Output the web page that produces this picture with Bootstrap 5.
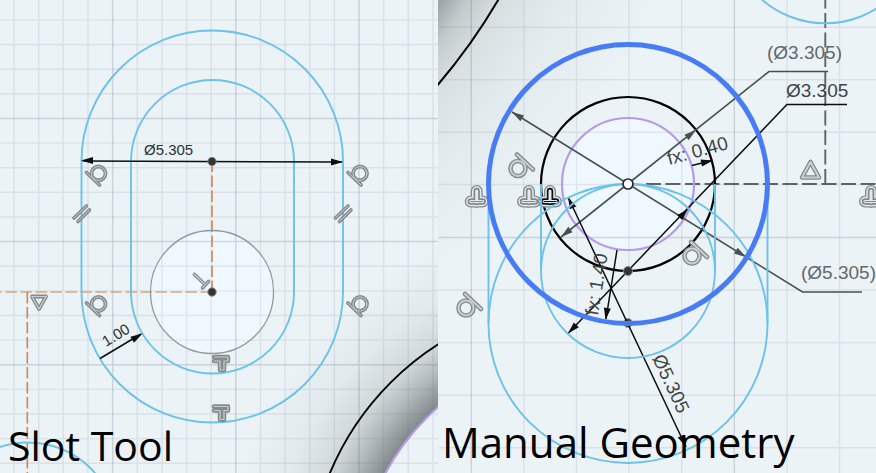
<!DOCTYPE html>
<html lang="en">
<head>
<meta charset="utf-8">
<meta name="viewport" content="width=device-width, initial-scale=1">
<title>Slot Tool and Manual Geometry</title>
<link rel="stylesheet" href="https://cdn.jsdelivr.net/npm/bootstrap@5.3.0/dist/css/bootstrap.min.css">
<style>
  body { background: #ebf3f7; font-family: "Liberation Sans", Arial, sans-serif; }
  .sketch { background: #ebf3f7; }
  .sketch svg { font-family: "Liberation Sans", Arial, sans-serif; }
  .sketch-title { color: #000; font-family: "Open Sans", "Noto Sans", sans-serif; font-weight: 500; font-size: 41px; line-height: 56px; padding-left: 8px; }
  .sketch-title.wide { font-size: 42px; padding: 0 0 3px 4px; }
  .minor { stroke: #5a6e78; stroke-opacity: .13; stroke-width: 1.4; }
  .major { stroke: #5a6e78; stroke-opacity: .23; stroke-width: 1.5; }
  .cyan { stroke: #6cc2e9; stroke-width: 1.9; }
  .ink { stroke: #0b0f10; stroke-width: 1.5; }
  .slate { stroke: #465052; stroke-width: 1.6; }
  .violet { stroke: #b69aea; stroke-width: 2.2; }
  .orange { stroke: #d28b55; stroke-width: 1.7; stroke-dasharray: 11.5 3.5; }
  .axis { stroke: #5d6466; stroke-width: 1.9; stroke-dasharray: 15 4.5; }
  .dim-sm { font-size: 15px; fill: #2b3133; }
  .dim { font-size: 19px; fill: #3f4547; }
  .dim-ref { font-size: 19px; fill: #63696b; }
  .glyph-edge { stroke: #85898b; }
  .glyph-core { stroke: #c9d0d3; }
</style>
</head>
<body>
<svg width="0" height="0" class="position-absolute" aria-hidden="true">
  <defs>
    <g id="tangent" fill="none" stroke-linecap="round">
      <g class="glyph-edge" stroke-width="3.800"><circle cx="2.500" cy="-1.500" r="7"/><path d="M-9.500-2.500L3.500 10"/></g>
      <g class="glyph-core" stroke-width="1"><circle cx="2.500" cy="-1.500" r="7"/><path d="M-9.500-2.500L3.500 10"/></g>
    </g>
    <g id="tangent-up" fill="none" stroke-linecap="round">
      <g class="glyph-edge" stroke-width="4.600"><circle r="7.500"/><path d="M-1-14L15 1"/></g>
      <g class="glyph-core" stroke-width="2"><circle r="7.500"/><path d="M-1-14L15 1"/></g>
    </g>
    <g id="parallel" fill="none" stroke-linecap="round">
      <path class="glyph-edge" d="M-7.500 5L5-7M-3.500 8.500L8-3" stroke-width="3.600"/>
      <path class="glyph-core" d="M-7.500 5L5-7M-3.500 8.500L8-3" stroke-width="1"/>
    </g>
    <g id="fixed" fill="none" stroke-linejoin="round" stroke-linecap="round">
      <path class="glyph-edge" d="M-7-6H7M-7-2H-1V7H3V-2H7V-6" stroke-width="4.500"/>
      <path class="glyph-core" d="M-7-6H7V-2H3V7H-1V-2H-7" stroke-width="1.200"/>
    </g>
    <g id="stamp" fill="none" stroke-linecap="round">
      <path d="M0-7V4M-6 3.500H6" stroke="#85898b" stroke-width="12"/>
      <path d="M0-7V4M-6 3.500H6" stroke="#e3eaed" stroke-width="9.400"/>
      <path d="M0-7V4M-6 3.500H6" stroke="currentColor" stroke-width="6.400"/>
      <path d="M0-7V4M-6 3.500H6" stroke="#e3eaed" stroke-width="3"/>
      <path d="M-6 3.500H6" stroke="currentColor" stroke-width="1"/>
    </g>
    <path id="arrow" d="M0 0L-12-3.500V3.500Z"/>
  </defs>
</svg>
<main class="container-fluid p-0">
  <div class="row g-0">
    <div class="col-6">
      <figure class="sketch position-relative overflow-hidden m-0">
        <svg class="d-block w-100 h-auto" viewBox="0 0 438 473" fill="none" role="img" aria-label="Slot drawn with the slot tool">
          <defs>
            <radialGradient id="shadeL" gradientUnits="userSpaceOnUse" cx="590" cy="582" r="370">
              <stop offset=".627" stop-color="#838a8c"/><stop offset=".7" stop-color="#b3babd"/><stop offset=".76" stop-color="#d0d8da"/><stop offset=".86" stop-color="#e1e9ec"/><stop offset="1" stop-color="#ebf3f7"/>
            </radialGradient>
          </defs>
          <circle cx="590" cy="582" r="370" fill="url(#shadeL)"/>
          <circle cx="590" cy="582" r="231.700" fill="#ebf3f7"/>
          <circle cx="212" cy="292" r="61.500" fill="#f0f8ff"/>
          <path class="minor" d="M14 0V473M38.700 0V473M63.300 0V473M88 0V473M137.300 0V473M162 0V473M186.600 0V473M211.200 0V473M260.500 0V473M285.100 0V473M309.700 0V473M334.400 0V473M383.600 0V473M408.300 0V473M433 0V473M0 19.900H438M0 44.500H438M0 69.200H438M0 93.800H438M0 143.100H438M0 167.700H438M0 192.300H438M0 217H438M0 266.200H438M0 290.900H438M0 315.500H438M0 340.100H438M0 389.400H438M0 414H438M0 438.600H438M0 463.300H438"/>
          <path class="major" d="M112.700 0V473M235.800 0V473M359 0V473M0 118.500H438M0 241.600H438M0 364.800H438"/>
          <circle cx="590" cy="582" r="282" stroke="#000" stroke-width="1.900"/>
          <circle cx="590" cy="582" r="231.700" class="violet"/>
          <path class="orange" d="M27.300 292V473M212 292V161"/>
          <path class="orange" stroke-opacity=".75" d="M212 292H0"/>
          <circle cx="28" cy="531.300" r="88.800" class="cyan"/>
          <rect x="81.500" y="30.500" width="261.500" height="392" rx="130.700" class="cyan"/>
          <rect x="131" y="80" width="163" height="293.500" rx="81.500" class="cyan"/>
          <circle cx="212" cy="292" r="61.500" stroke="#929a9e" stroke-width="1.300"/>
          <path class="ink" d="M83 161L342 162M100 358.500L141 334"/>
          <g fill="#0b0f10"><use href="#arrow" transform="translate(81 160.500) rotate(180)"/><use href="#arrow" transform="translate(343 162)"/><use href="#arrow" transform="translate(142.500 333.500) rotate(-31)"/></g>
          <g fill="#333" stroke="#8c8c8c" stroke-width="1"><circle cx="212" cy="161.500" r="4.200"/><circle cx="212" cy="292" r="4.200"/></g>
          <use href="#tangent" x="96" y="175"/><use href="#tangent" x="357.500" y="175"/><use href="#tangent" x="96" y="305.500"/><use href="#tangent" x="357.500" y="305.500"/>
          <use href="#parallel" x="81.500" y="213"/><use href="#parallel" x="343" y="213"/>
          <use href="#fixed" x="221" y="363"/><use href="#fixed" x="221" y="412.500"/>
          <path class="glyph-edge" d="M194.500 274.500L204.500 284M202.500 288L208.500 281.500" stroke-width="3.600" stroke-linecap="round"/>
          <path class="glyph-core" d="M194.500 274.500L204.500 284M202.500 288L208.500 281.500" stroke-width="1.100" stroke-linecap="round"/>
          <path class="glyph-edge" d="M32 296.500H46L39 309Z" stroke-width="3.800" stroke-linejoin="round"/><path class="glyph-core" d="M32 296.500H46L39 309Z" stroke-width="1.200"/>
          <text x="144" y="155" class="dim-sm">Ø5.305</text>
          <text class="dim-sm" transform="translate(106 347) rotate(-31)">1.00</text>
        </svg>
        <figcaption class="sketch-title position-absolute start-0 bottom-0">Slot Tool</figcaption>
      </figure>
    </div>
    <div class="col-6">
      <figure class="sketch position-relative overflow-hidden m-0">
        <svg class="d-block w-100 h-auto" viewBox="0 0 438 473" fill="none" role="img" aria-label="Slot drawn with manual geometry">
          <defs>
            <radialGradient id="shadeR" gradientUnits="userSpaceOnUse" cx="-459" cy="-305" r="750">
              <stop offset=".735" stop-color="#9aa1a4"/><stop offset=".77" stop-color="#c3cbcd"/><stop offset=".81" stop-color="#d8e0e2"/><stop offset=".88" stop-color="#e3ebee"/><stop offset="1" stop-color="#ebf3f7"/>
            </radialGradient>
          </defs>
          <circle cx="-459" cy="-305" r="750" fill="url(#shadeR)"/>
          <circle cx="190" cy="184" r="66" fill="#f0f8ff"/>
          <path class="minor" d="M85.900 0V473M138.500 0V473M191 0V473M243.700 0V473M348.900 0V473M401.500 0V473M0 27.300H438M0 79.800H438M0 132.300H438M0 184.500H438M0 290H438M0 342.600H438M0 395.200H438M0 447.700H438"/>
          <path class="major" d="M33.300 0V473M296.300 0V473M0 237.500H438"/>
          <circle cx="-459" cy="-305" r="602" stroke="#000" stroke-width="2"/>
          <circle cx="-459" cy="-305" r="551" class="violet"/>
          <path class="axis" d="M387.300 184V0M208 184H438"/>
          <circle cx="190" cy="184" r="87" stroke="#000" stroke-width="2.200"/>
          <circle cx="190" cy="184" r="66" class="violet"/>
          <path class="slate" d="M390 71.500H331L123 237M424 292H364.500L74 112"/>
          <g fill="#465052"><use href="#arrow" transform="translate(258 130) rotate(-38)"/><use href="#arrow" transform="translate(123 237) rotate(142)"/><use href="#arrow" transform="translate(74 112) rotate(212)"/><use href="#arrow" transform="translate(308 257) rotate(32)"/></g>
          <circle cx="190" cy="323" r="4.500" fill="#444" stroke="#999"/>
          <g color="#85898b"><use href="#stamp" x="38.700" y="198"/><use href="#stamp" x="91" y="198"/><use href="#stamp" x="433" y="198"/></g>
          <g color="#111"><use href="#stamp" x="112" y="198"/></g>
          <path class="ink" d="M409 104.500H349L130 333.500M130 197L248 447M254 165.500L274 160.500M179 250L168 319"/>
          <g fill="#0b0f10"><use href="#arrow" transform="translate(250 209) rotate(-46)"/><use href="#arrow" transform="translate(130 333.500) rotate(134)"/><use href="#arrow" transform="translate(130 197) rotate(245)"/><use href="#arrow" transform="translate(248 447) rotate(65)"/><use href="#arrow" transform="translate(275 160.500) rotate(-12)"/><use href="#arrow" transform="translate(167.500 320) rotate(99)"/></g>
          <g class="cyan"><circle cx="387.300" cy="-73.500" r="96.800"/><circle cx="190" cy="271" r="87"/><circle cx="190" cy="323.500" r="139.500"/><path d="M103 184V271M277 184V271M50.500 184V323M329.500 184V323"/></g>
          <circle cx="190" cy="184" r="139.500" stroke="#477cf5" stroke-width="5"/>
          <circle cx="190" cy="184" r="5" fill="#fff" stroke="#2b2b2b" stroke-width="1.700"/>
          <circle cx="190" cy="271" r="4.500" fill="#333" stroke="#888"/>
          <use href="#tangent-up" x="80" y="168.500"/><use href="#tangent-up" x="28" y="308"/><use href="#tangent-up" x="254" y="256"/>
          <path class="glyph-edge" d="M364 177.500H381L372.500 162Z" stroke-width="4.600" stroke-linejoin="round"/><path class="glyph-core" d="M364 177.500H381L372.500 162Z" stroke-width="2" stroke-linejoin="round"/>
          <text x="329" y="59" class="dim-ref">(Ø3.305)</text>
          <text x="348" y="97" class="dim">Ø3.305</text>
          <text x="363" y="279" class="dim-ref">(Ø5.305)</text>
          <text class="dim" transform="translate(231 165) rotate(-15)">fx: 0.40</text>
          <text class="dim" transform="translate(160 316) rotate(-81)">fx: 1.40</text>
          <text class="dim" transform="translate(214 358) rotate(65)">Ø5.305</text>
        </svg>
        <figcaption class="sketch-title wide position-absolute start-0 bottom-0">Manual Geometry</figcaption>
      </figure>
    </div>
  </div>
</main>
<script src="https://cdn.jsdelivr.net/npm/bootstrap@5.3.0/dist/js/bootstrap.bundle.min.js"></script>
</body>
</html>
